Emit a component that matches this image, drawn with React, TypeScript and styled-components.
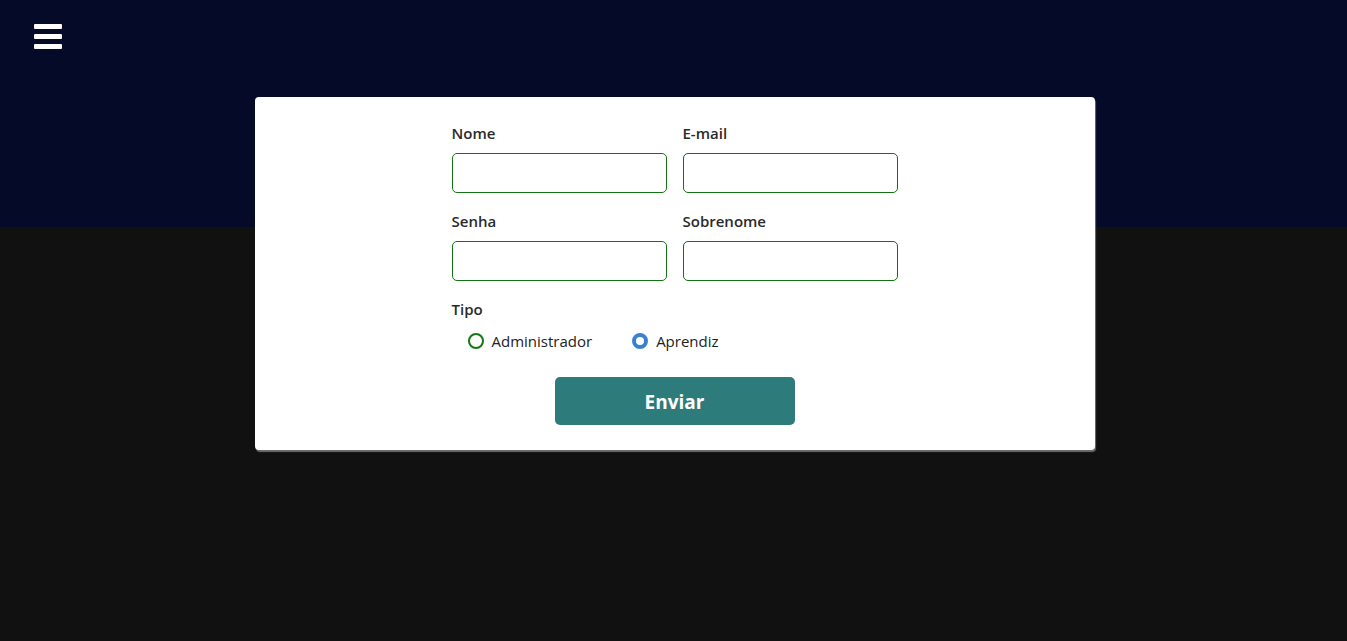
import React, { useState } from "react";
import styled, { createGlobalStyle } from "styled-components";

const Global = createGlobalStyle`
  html, body { margin: 0; padding: 0; }
  body {
    font-family: "Open Sans", "Noto Sans", sans-serif;
    background: #111111;
  }
  * { box-sizing: border-box; }
`;

const Page = styled.div`
  min-height: 641px;
  background: linear-gradient(to bottom, #050a28 0, #050a28 227px, #111111 227px);
  display: flex;
  flex-direction: column;
  align-items: center;
`;

const Header = styled.header`
  align-self: stretch;
  padding: 24px 34px 0;
`;

const MenuButton = styled.button`
  width: 28px;
  height: 25px;
  padding: 0;
  border: none;
  background: transparent;
  display: flex;
  flex-direction: column;
  justify-content: space-between;
  cursor: pointer;
`;

const Bar = styled.span`
  display: block;
  height: 5px;
  width: 28px;
  background: #ffffff;
  border-radius: 1px;
`;

const Card = styled.main`
  margin-top: 48px;
  margin-left: 2px;
  width: 840px;
  background: #ffffff;
  border-radius: 4px;
  box-shadow: 1px 2px 1px rgba(150, 150, 150, 0.7);
  display: flex;
  justify-content: center;
  padding: 24px 0 25px;
`;

const Form = styled.form`
  width: 446px;
  display: flex;
  flex-direction: column;
`;

const Grid = styled.div`
  display: grid;
  grid-template-columns: 215px 215px;
  column-gap: 16px;
  row-gap: 16px;
`;

const Field = styled.label`
  display: flex;
  flex-direction: column;
  gap: 8px;
`;

const LabelText = styled.span`
  font-size: 15px;
  font-weight: 600;
  color: #2a2a2a;
  line-height: 24px;
`;

const Input = styled.input`
  height: 40px;
  width: 100%;
  border: 1px solid #137213;
  border-radius: 5px;
  font-size: 15px;
  padding: 0 10px;
  outline: none;
  background: #fff;
`;

const Fieldset = styled.div`
  margin-top: 16px;
  display: flex;
  flex-direction: column;
`;

const Options = styled.div`
  display: flex;
  gap: 40px;
  padding-left: 16px;
  margin-top: 8px;
`;

const Option = styled.label`
  display: flex;
  align-items: center;
  gap: 8px;
  font-size: 15px;
  color: #222222;
  line-height: 24px;
  cursor: pointer;
`;

const Dot = styled.span<{ $checked: boolean }>`
  width: 16px;
  height: 16px;
  border-radius: 50%;
  border: ${(p) => (p.$checked ? "4px solid #3a80d2" : "2px solid #147814")};
  background: #ffffff;
`;

const HiddenRadio = styled.input`
  display: none;
`;

const Submit = styled.button`
  align-self: center;
  margin-top: 24px;
  width: 240px;
  height: 48px;
  padding: 2px 0 0;
  border: none;
  border-radius: 5px;
  background: #2e7b7b;
  color: #ffffff;
  font-family: "Open Sans", "Noto Sans", sans-serif;
  font-size: 19px;
  font-weight: 700;
  cursor: pointer;
`;

export default function App() {
  const [tipo, setTipo] = useState("aprendiz");
  const fields = ["Nome", "E-mail", "Senha", "Sobrenome"];
  const opts = [
    { v: "admin", t: "Administrador" },
    { v: "aprendiz", t: "Aprendiz" },
  ];
  return (
    <>
      <Global />
      <Page>
        <Header>
          <MenuButton aria-label="menu">
            <Bar />
            <Bar />
            <Bar />
          </MenuButton>
        </Header>
        <Card>
          <Form onSubmit={(e) => e.preventDefault()}>
            <Grid>
              {fields.map((f) => (
                <Field key={f}>
                  <LabelText>{f}</LabelText>
                  <Input type={f === "Senha" ? "password" : "text"} />
                </Field>
              ))}
            </Grid>
            <Fieldset>
              <LabelText>Tipo</LabelText>
              <Options>
                {opts.map((o) => (
                  <Option key={o.v}>
                    <HiddenRadio
                      type="radio"
                      name="tipo"
                      checked={tipo === o.v}
                      onChange={() => setTipo(o.v)}
                    />
                    <Dot $checked={tipo === o.v} />
                    {o.t}
                  </Option>
                ))}
              </Options>
            </Fieldset>
            <Submit type="submit">Enviar</Submit>
          </Form>
        </Card>
      </Page>
    </>
  );
}
